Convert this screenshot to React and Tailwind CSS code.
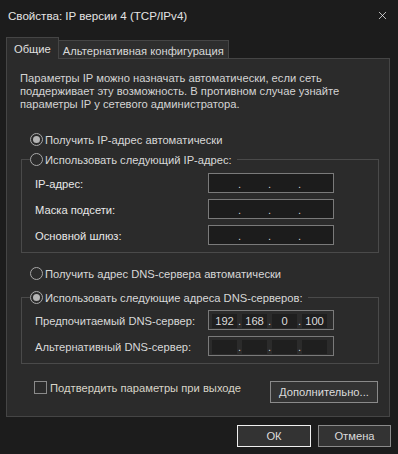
import { X } from 'lucide-react'

function Radio({ checked, label }) {
  return (
    <span className="flex items-center h-[15px]">
      <span className="w-[13px] h-[13px] rounded-full border border-[#a8a8a8] flex items-center justify-center shrink-0">
        {checked && <span className="w-[7px] h-[7px] rounded-full bg-[#b4b4b4]" />}
      </span>
      <span className="ml-[2px] text-[#d8d8d8]">{label}</span>
    </span>
  )
}

function IpField({ values, disabled }) {
  const parts = values || ['', '', '', '']
  return (
    <div className={`w-[126px] h-[20px] border border-[#7a7a7a] flex items-stretch pl-[3px] pr-[4px] pt-[3px] pb-[1px] ${disabled ? 'bg-[#1c1c1c]' : 'bg-[#2b2b2b]'}`}>
      {parts.map((v, i) => (
        <div key={i} className="flex items-stretch">
          {i > 0 && <span className="w-[5px] text-center text-[#cfcfcf] leading-[14px]">.</span>}
          <span className={`w-[25px] text-center leading-[14px] text-[#dcdcdc] ${disabled ? 'bg-[#1c1c1c]' : 'bg-[#1f1f1f]'}`}>{v}</span>
        </div>
      ))}
    </div>
  )
}

function Row({ label, values, disabled }) {
  return (
    <div className="flex items-center h-[20px]">
      <span className={`w-[186px] pl-[13px] pt-[1px] ${disabled ? 'text-[#e8e8e8]' : 'text-[#d8d8d8]'}`}>{label}</span>
      <IpField values={values} disabled={disabled} />
    </div>
  )
}

export default function App() {
  return (
    <div className="w-[398px] h-[454px] bg-[#1c1c1c] text-[11.2px] leading-[14px] text-[#d8d8d8] overflow-hidden" style={{ fontFamily: '"Liberation Sans", Arial, sans-serif' }}>
      {/* Title bar */}
      <div className="h-[37px] flex items-start justify-between">
        <span className="ml-[8px] mt-[9px] text-[11.6px] text-[#e4e4e4]">Свойства: IP версии 4 (TCP/IPv4)</span>
        <X size={13} strokeWidth={1.3} className="text-white mt-[9px] mr-[9px]" />
      </div>

      {/* Tabs */}
      <div className="flex items-end pl-[6px] relative z-10 -mb-px">
        <div className="h-[22px] px-[7px] pt-[4px] bg-[#2b2b2b] border border-b-0 border-[#454545] text-[#e0e0e0]">Общие</div>
        <div className="h-[19px] px-[4px] pt-[3px] bg-[#2e2e2e] border border-l-0 border-[#454545] text-[#d8d8d8]">Альтернативная конфигурация</div>
      </div>

      {/* Panel */}
      <div className="ml-[6px] w-[384px] h-[359px] bg-[#2b2b2b] border border-[#454545] flex flex-col">
        <p className="mt-[13px] ml-[13px] leading-[13px] text-[#d4d4d4]">
          Параметры IP можно назначать автоматически, если сеть<br />
          поддерживает эту возможность. В противном случае узнайте<br />
          параметры IP у сетевого администратора.
        </p>

        <div className="mt-[21px] ml-[23px]">
          <Radio checked label="Получить IP-адрес автоматически" />
        </div>

        <fieldset className="mt-[5px] ml-[14px] w-[358px] border border-[#4a4a4a] pb-[7px]">
          <legend className="ml-[8px] pr-[5px]">
            <Radio label="Использовать следующий IP-адрес:" />
          </legend>
          <div className="mt-[6px] flex flex-col gap-[6px]">
            <Row label="IP-адрес:" disabled />
            <Row label="Маска подсети:" disabled />
            <Row label="Основной шлюз:" disabled />
          </div>
        </fieldset>

        <div className="mt-[13px] ml-[23px]">
          <Radio label="Получить адрес DNS-сервера автоматически" />
        </div>

        <fieldset className="mt-[9px] ml-[14px] w-[358px] border border-[#4a4a4a] pb-[7px]">
          <legend className="ml-[8px] pr-[5px]">
            <Radio checked label="Использовать следующие адреса DNS-серверов:" />
          </legend>
          <div className="mt-[5px] flex flex-col gap-[6px]">
            <Row label="Предпочитаемый DNS-сервер:" values={['192', '168', '0', '100']} />
            <Row label="Альтернативный DNS-сервер:" />
          </div>
        </fieldset>

        <div className="mt-[17px] flex items-start justify-between">
          <label className="ml-[27px] flex items-center h-[13px]">
            <span className="w-[13px] h-[13px] border border-[#8a8a8a]" />
            <span className="ml-[3px] text-[#d8d4c8]">Подтвердить параметры при выходе</span>
          </label>
          <button className="mr-[11px] w-[108px] h-[22px] border border-[#8a8a8a] bg-[#333333] text-[#dcdcdc]">Дополнительно...</button>
        </div>
      </div>

      {/* Buttons */}
      <div className="mt-[8px] flex justify-end gap-[7px] pr-[7px]">
        <button className="w-[74px] h-[22px] border border-[#f0f0f0] bg-[#333333] text-[#dcdcdc]">ОК</button>
        <button className="w-[73px] h-[22px] border border-[#8a8a8a] bg-[#333333] text-[#dcdcdc]">Отмена</button>
      </div>
    </div>
  )
}
